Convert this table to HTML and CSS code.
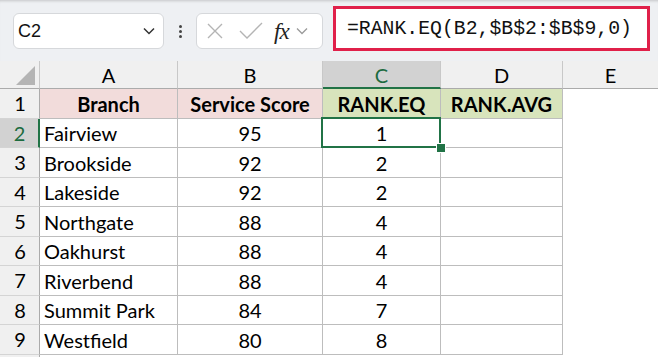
FILE: index.html
```html
<!DOCTYPE html>
<html>
<head>
<meta charset="utf-8">
<link rel="stylesheet" href="styles.css">
</head>
<body>
<div class="app">
  <div class="toolbar">
    <div class="namebox">
      <span class="name">C2</span>
      <svg class="chev" width="12" height="8" viewBox="0 0 12 8"><path d="M1 1.5 L6 6.5 L11 1.5" fill="none" stroke="#333" stroke-width="1.5"/></svg>
    </div>
    <div class="dots"><span></span><span></span><span></span></div>
    <div class="fxbox">
      <svg width="18" height="18" viewBox="0 0 18 18"><path d="M2 2 L16 16 M16 2 L2 16" stroke="#b4b4b4" stroke-width="1.4" fill="none"/></svg>
      <svg width="24" height="18" viewBox="0 0 24 18"><path d="M1 9 L8 16 L23 1" stroke="#b4b4b4" stroke-width="1.4" fill="none"/></svg>
      <span class="fx">fx</span>
      <svg width="12" height="8" viewBox="0 0 12 8"><path d="M1 1.5 L6 6.5 L11 1.5" fill="none" stroke="#9a9a9a" stroke-width="1.3"/></svg>
    </div>
    <div class="formula">=RANK.EQ(B2,$B$2:$B$9,0)</div>
  </div>
  <div class="sheet">
    <div class="corner"><span class="tri"></span></div>
    <div class="ch">A</div>
    <div class="ch">B</div>
    <div class="ch sel">C</div>
    <div class="ch">D</div>
    <div class="ch last">E</div>

    <div class="rh">1</div>
    <div class="c hd pink">Branch</div>
    <div class="c hd pink">Service Score</div>
    <div class="c hd green">RANK.EQ</div>
    <div class="c hd green">RANK.AVG</div>
    <div class="e"></div>

    <div class="rh sel">2</div>
    <div class="c">Fairview</div>
    <div class="c n">95</div>
    <div class="c n active">1<span class="handle"></span></div>
    <div class="c"></div>
    <div class="e"></div>

    <div class="rh">3</div>
    <div class="c">Brookside</div>
    <div class="c n">92</div>
    <div class="c n">2</div>
    <div class="c"></div>
    <div class="e"></div>

    <div class="rh">4</div>
    <div class="c">Lakeside</div>
    <div class="c n">92</div>
    <div class="c n">2</div>
    <div class="c"></div>
    <div class="e"></div>

    <div class="rh">5</div>
    <div class="c">Northgate</div>
    <div class="c n">88</div>
    <div class="c n">4</div>
    <div class="c"></div>
    <div class="e"></div>

    <div class="rh">6</div>
    <div class="c">Oakhurst</div>
    <div class="c n">88</div>
    <div class="c n">4</div>
    <div class="c"></div>
    <div class="e"></div>

    <div class="rh">7</div>
    <div class="c">Riverbend</div>
    <div class="c n">88</div>
    <div class="c n">4</div>
    <div class="c"></div>
    <div class="e"></div>

    <div class="rh">8</div>
    <div class="c">Summit Park</div>
    <div class="c n">84</div>
    <div class="c n">7</div>
    <div class="c"></div>
    <div class="e"></div>

    <div class="rh">9</div>
    <div class="c">Westfield</div>
    <div class="c n">80</div>
    <div class="c n">8</div>
    <div class="c"></div>
    <div class="e"></div>

    <div class="rh"></div>
    <div class="e"></div>
    <div class="e"></div>
    <div class="e"></div>
    <div class="e"></div>
    <div class="e"></div>
  </div>
</div>
</body>
</html>
```
FILE: styles.css
```css
* { box-sizing: border-box; }
html, body { margin: 0; padding: 0; background: #fff; }
.app { width: 658px; height: 357px; overflow: hidden; }

.toolbar {
  height: 61px;
  background: #eef0f3;
  display: flex;
  align-items: flex-start;
  padding: 13px 0 0 13px;
  box-shadow: inset 0 3px 3px -2px rgba(0,0,0,0.18);
}
.namebox {
  width: 151px; height: 36px;
  background: #fff;
  border: 1px solid #d6d8db;
  border-radius: 6px;
  display: flex; align-items: center; justify-content: space-between;
  padding: 0 8px 0 4px;
}
.name { font-family: "Liberation Sans", Arial, sans-serif; font-size: 18px; color: #111; }
.dots {
  width: 32px; height: 36px;
  display: flex; flex-direction: column; align-items: center; justify-content: center; gap: 2px;
}
.dots span { width: 3px; height: 3px; border-radius: 50%; background: #444; }
.fxbox {
  width: 127px; height: 36px;
  background: #fff;
  border: 1px solid #d6d8db;
  border-radius: 6px;
  display: flex; align-items: center;
  padding: 0 4px 0 9px;
}
.fxbox svg:nth-child(2) { margin-left: 15px; }
.fx {
  font-family: "Liberation Serif", "Times New Roman", serif;
  font-style: italic; font-size: 23px; color: #222;
  margin-left: 11px; margin-right: 7px; letter-spacing: -1px;
  line-height: 1;
}
.formula {
  margin-left: 10px; margin-top: -7px;
  width: 317px; height: 45px;
  border: 3px solid #e0204a;
  background: #fff;
  font-family: "Liberation Mono", "DejaVu Sans Mono", monospace;
  font-size: 19.8px; color: #111;
  display: flex; align-items: center;
  padding-left: 11px;
  white-space: nowrap;
}

.sheet {
  display: grid;
  grid-template-columns: 40px 138px 145px 118px 122px 1fr;
  grid-template-rows: 28px repeat(9, 29.5px) 20px;
  font-family: Lato, "Open Sans", sans-serif;
  font-size: 20px;
  color: #000;
}
.corner {
  background: #f0f0f0;
  border-right: 1px solid #c8c8c8;
  border-bottom: 1px solid #ababab;
  position: relative;
}
.tri {
  position: absolute; right: 4px; bottom: 3px;
  width: 0; height: 0;
  border-left: 19px solid transparent;
  border-bottom: 19px solid #b4b4b4;
}
.ch {
  background: #f0f0f0;
  border-right: 1px solid #c8c8c8;
  border-bottom: 1px solid #ababab;
  display: flex; align-items: center; justify-content: center;
  padding-top: 1px;
}
.ch.last { border-right: none; }
.ch.sel { background: #d2d2d2; color: #1d6b3f; border-bottom: 2px solid #217346; }
.rh {
  background: #f0f0f0;
  border-right: 1px solid #ababab;
  border-bottom: 1px solid #d4d4d4;
  display: flex; align-items: center; justify-content: center;
  padding-left: 1px;
}
.rh.sel { background: #d2d2d2; color: #1d6b3f; border-right: 2px solid #217346; }
.c {
  border-right: 1px solid #bdbdbd;
  border-bottom: 1px solid #bdbdbd;
  display: flex; align-items: center;
  padding-left: 4px;
  white-space: nowrap;
  padding-top: 1px;
}
.c.n, .c.hd { justify-content: center; padding-left: 0; }
.c.hd { font-weight: 700; }
.pink { background: #f2dcdb; }
.green { background: #d8e4bc; }
.e { background: #fff; }
.active { position: relative; }
.active::before {
  content: "";
  position: absolute; left: -2px; top: -2px; right: -1px; bottom: -1px;
  border: 2px solid #217346;
}
.handle {
  position: absolute; right: -6px; bottom: -6px;
  width: 10px; height: 10px;
  background: #217346;
  border: 1.5px solid #fff;
  z-index: 2;
}
```
